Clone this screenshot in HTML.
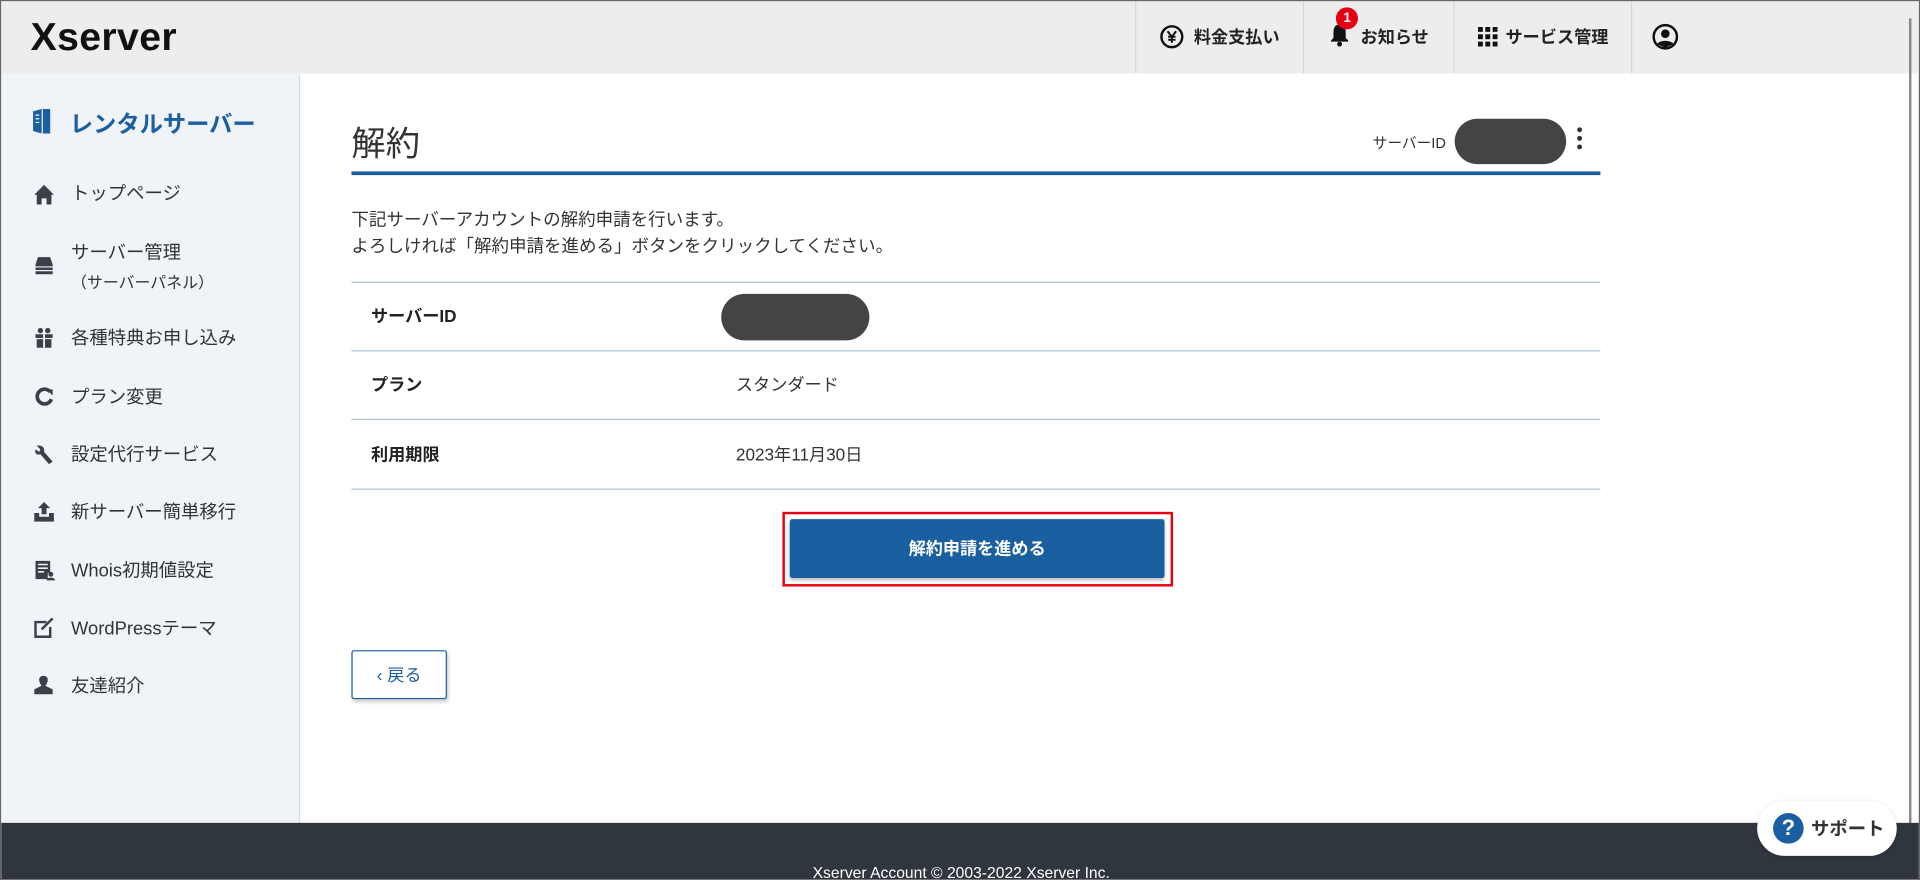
<!DOCTYPE html>
<html><head><meta charset="utf-8"><style>
*{box-sizing:border-box;margin:0;padding:0}
html,body{width:1920px;height:880px;overflow:hidden;background:#fff}
#w{position:absolute;left:0;top:0;width:1568px;height:719px;transform:scale(1.22449);transform-origin:0 0;font-family:"Liberation Sans","Noto Sans CJK JP",sans-serif;color:#333;border:1px solid #666;overflow:hidden}
.hdr{position:absolute;left:0;top:0;width:1568px;height:59px;background:#ededed}
.logo{position:absolute;left:24px;top:11px;font-size:32px;font-weight:bold;color:#111;letter-spacing:0.3px}
.nav{position:absolute;top:0;height:59px;border-left:1px solid #d6d6d6;display:flex;align-items:center;justify-content:center;font-size:14px;font-weight:bold;color:#222;padding-bottom:2px}
.side{position:absolute;left:0;top:59px;width:244px;height:612px;background:#f0f4f8;border-right:1px solid #d8dde2}
.si{position:absolute;left:57px;font-size:15px;color:#333}
.ic{position:absolute;left:26px;width:18px;height:18px}
.main{position:absolute;left:286px}
.foot{position:absolute;left:0;top:671px;width:1568px;height:48px;background:#30363e;color:#fff;font-size:12.8px;text-align:center;padding-top:33px}
.line{position:absolute;left:286px;width:1020px;height:1px;background:#a9c2da}
.lab{position:absolute;left:302px;font-size:14px;font-weight:bold;color:#222}
.val{position:absolute;left:600px;font-size:14px;color:#333}
</style></head><body><div id="w">
<div class="hdr">
 <div class="logo">Xserver</div>
 <div class="nav" style="left:926px;width:137px"><svg width="20" height="20" viewBox="0 0 20 20" style="margin-right:8px"><circle cx="10" cy="10" r="8.5" fill="none" stroke="#111" stroke-width="2"/><path d="M6.5 5.5L10 10L13.5 5.5M10 10V15M7 10H13M7 12.5H13" stroke="#111" stroke-width="1.6" fill="none"/></svg>料金支払い</div>
 <div class="nav" style="left:1063px;width:123px"><span style="position:relative;margin-right:8px"><svg width="18" height="20" viewBox="0 0 18 20"><path d="M9 2C5 2 4 5 4 9V13L2 15V16H16V15L14 13V9C14 5 13 2 9 2Z" fill="#111"/><circle cx="9" cy="18" r="2" fill="#111"/></svg><span style="position:absolute;left:6px;top:-12px;width:18px;height:18px;border-radius:50%;background:#e60012;color:#fff;font-size:11px;text-align:center;line-height:18px">1</span></span>お知らせ</div>
 <div class="nav" style="left:1186px;width:145px"><svg width="16" height="16" viewBox="0 0 16 16" style="margin-right:7px" fill="#111"><rect x="0" y="0" width="4" height="4"/><rect x="6" y="0" width="4" height="4"/><rect x="12" y="0" width="4" height="4"/><rect x="0" y="6" width="4" height="4"/><rect x="6" y="6" width="4" height="4"/><rect x="12" y="6" width="4" height="4"/><rect x="0" y="12" width="4" height="4"/><rect x="6" y="12" width="4" height="4"/><rect x="12" y="12" width="4" height="4"/></svg>サービス管理</div>
 <div class="nav" style="left:1331px;width:56px;justify-content:flex-start;padding-left:16px"><svg width="22" height="22" viewBox="0 0 22 22"><circle cx="11" cy="11" r="9.5" fill="none" stroke="#111" stroke-width="2"/><circle cx="11" cy="8.5" r="3.5" fill="#111"/><path d="M4.5 17C6 13.5 16 13.5 17.5 17L11 20Z" fill="#111"/></svg></div>
 <div style="position:absolute;left:1558px;top:14px;width:2px;height:705px;background:#888"></div>
</div>
<div class="side">
 <svg style="position:absolute;left:24px;top:28px" width="18" height="22" viewBox="0 0 18 22"><path d="M2 3L9 1V21L2 19Z" fill="#1a5fa0"/><path d="M10 1H16V21H10Z" fill="#1a5fa0"/><path d="M4 6H7M4 9H7M4 12H7" stroke="#fff" stroke-width="1"/></svg>
 <div style="position:absolute;left:56px;top:27px;font-size:19px;font-weight:bold;color:#1a5fa0">レンタルサーバー</div>
 <svg class="ic" style="top:90px" viewBox="0 0 18 18"><path d="M9 1L1 9H3V17H7V12H11V17H15V9H17Z" fill="#3a4048"/></svg><div class="si" style="top:87px">トップページ</div>
 <svg class="ic" style="top:148px" viewBox="0 0 18 18"><path d="M4 2H14L16 8V16H2V8Z" fill="#3a4048"/><path d="M2 10H16M2 13H16" stroke="#f0f4f8" stroke-width="1"/></svg><div class="si" style="top:135px">サーバー管理</div><div class="si" style="top:160px;left:57px;font-size:13px">（サーバーパネル）</div>
 <svg class="ic" style="top:207px" viewBox="0 0 18 18"><path d="M2 6H16V9H2ZM3 10H15V17H3Z" fill="#3a4048"/><path d="M9 6V17" stroke="#f0f4f8" stroke-width="1.5"/><circle cx="6" cy="3" r="2.2" fill="#3a4048"/><circle cx="12" cy="3" r="2.2" fill="#3a4048"/></svg><div class="si" style="top:205px">各種特典お申し込み</div>
 <svg class="ic" style="top:255px" viewBox="0 0 18 18"><path d="M14 5A6 6 0 1 0 15 11" fill="none" stroke="#3a4048" stroke-width="3"/><path d="M11 3H16V8Z" fill="#3a4048"/></svg><div class="si" style="top:253px">プラン変更</div>
 <svg class="ic" style="top:302px" viewBox="0 0 18 18"><path d="M3 2L6 5L5 7L2 5C1 8 3 10 6 9L13 17L16 15L9 7C10 4 7 1 3 2Z" fill="#3a4048"/></svg><div class="si" style="top:300px">設定代行サービス</div>
 <svg class="ic" style="top:349px" viewBox="0 0 18 18"><path d="M9 1L14 6H11V11H7V6H4Z" fill="#3a4048"/><path d="M1 10H5V13H13V10H17V17H1Z" fill="#3a4048"/></svg><div class="si" style="top:347px">新サーバー簡単移行</div>
 <svg class="ic" style="top:397px" viewBox="0 0 18 18"><path d="M2 1H14V11H12V16H2Z" fill="#3a4048"/><path d="M4 4H12M4 7H12M4 10H9" stroke="#f0f4f8" stroke-width="1.3"/><circle cx="14.5" cy="12" r="2" fill="#3a4048"/><path d="M11 17C11 14 18 14 18 17Z" fill="#3a4048"/></svg><div class="si" style="top:395px">Whois初期値設定</div>
 <svg class="ic" style="top:443px" viewBox="0 0 18 18"><path d="M1 4H11V6H3V16H13V9H15V18H1Z" fill="#3a4048"/><path d="M7 11L16 2" stroke="#3a4048" stroke-width="2"/></svg><div class="si" style="top:442px">WordPressテーマ</div>
 <svg class="ic" style="top:490px" viewBox="0 0 18 18"><path d="M5 5C5 1 12 1 12 5C12 8 10 10 10 10L16 13V17H1V13L7 10C7 10 5 8 5 5Z" fill="#3a4048"/></svg><div class="si" style="top:489px">友達紹介</div>
</div>
<div class="main" style="top:95px;font-size:28px;color:#333">解約</div>
<div style="position:absolute;left:1120px;top:107px;font-size:12px;color:#333">サーバーID</div>
<div style="position:absolute;left:1187px;top:96px;width:91px;height:37px;border-radius:19px;background:#444"></div>
<div style="position:absolute;left:1287px;top:103px;width:4px;height:4px;border-radius:50%;background:#333;box-shadow:0 7px 0 #333,0 14px 0 #333"></div>
<div style="position:absolute;left:286px;top:139px;width:1020px;height:3px;background:#1a5fa0"></div>
<div class="main" style="top:168px;font-size:14.3px;line-height:22px;color:#333">下記サーバーアカウントの解約申請を行います。<br>よろしければ「解約申請を進める」ボタンをクリックしてください。</div>
<div class="line" style="top:229px"></div>
<div class="line" style="top:285px"></div>
<div class="line" style="top:341px"></div>
<div class="line" style="top:398px"></div>
<div class="lab" style="top:247px">サーバーID</div>
<div style="position:absolute;left:588px;top:239px;width:121px;height:38px;border-radius:19px;background:#444"></div>
<div class="lab" style="top:303px">プラン</div><div class="val" style="top:303px">スタンダード</div>
<div class="lab" style="top:360px">利用期限</div><div class="val" style="top:360px">2023年11月30日</div>
<div style="position:absolute;left:638px;top:417px;width:319px;height:61px;border:2px solid #e60012"></div>
<div style="position:absolute;left:644px;top:423px;width:306px;height:48px;background:#1a5fa0;border-radius:2px;box-shadow:0 2px 3px rgba(0,0,0,.25);color:#fff;font-size:14px;font-weight:bold;text-align:center;line-height:48px">解約申請を進める</div>
<div style="position:absolute;left:286px;top:530px;width:78px;height:40px;border:1px solid #1a5fa0;border-radius:2px;box-shadow:1px 2px 3px rgba(0,0,0,.2);color:#1a5fa0;font-size:14px;text-align:center;line-height:38px">‹ 戻る</div>
<div class="foot">Xserver Account © 2003-2022 Xserver Inc.</div>
<div style="position:absolute;left:1434px;top:653px;width:114px;height:45px;background:#fff;border-radius:23px;box-shadow:0 1px 4px rgba(0,0,0,.15);display:flex;align-items:center;padding-left:13px;font-size:15px;font-weight:bold;color:#333"><span style="width:25px;height:25px;border-radius:50%;background:#1a5fa0;color:#fff;text-align:center;line-height:25px;font-size:18px;margin-right:6px">?</span>サポート</div>
</div></body></html>
